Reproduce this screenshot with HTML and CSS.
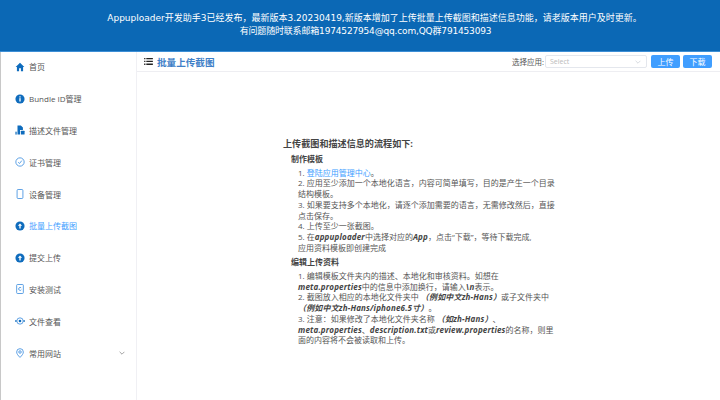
FILE: index.html
```html
<!DOCTYPE html>
<html lang="zh-CN">
<head>
  <meta charset="UTF-8" />
  <title>批量上传截图</title>
  <link rel="stylesheet" href="styles.css">
</head>
<body>
  <header class="notice">
    <p class="release">Appuploader开发助手3已经发布，最新版本3.20230419,新版本增加了上传批量上传截图和描述信息功能，请老版本用户及时更新。</p>
    <p class="contact">有问题随时联系邮箱1974527954@qq.com,QQ群791453093</p>
  </header>

  <div class="layout">
    <nav class="sidebar">
      <a class="item">
        <svg viewBox="0 0 12 12"><path class="fill" d="M6 1 .8 6h1.500v5h2.600V7.600h2.200V11h2.600V6h1.500z"/></svg>
        <span>首页</span>
      </a>
      <a class="item">
        <svg viewBox="0 0 12 12"><circle class="fill" cx="6" cy="6" r="5.500"/><rect x="5.200" y="5" width="1.600" height="4" fill="#fff"/><rect x="5.200" y="2.800" width="1.600" height="1.400" fill="#fff"/></svg>
        <span>Bundle ID管理</span>
      </a>
      <a class="item">
        <svg viewBox="0 0 12 12"><path class="fill" d="M3 .5h4l2.500 2.500v3H6v5.500H3z"/><rect class="fill" x="7" y="7" width="4.500" height="4.500" rx=".6"/><rect class="fill" x=".5" y="8" width="1.500" height="3.500"/></svg>
        <span>描述文件管理</span>
      </a>
      <a class="item">
        <svg viewBox="0 0 12 12"><circle class="line" cx="6" cy="6" r="5"/><path class="line" d="M3.800 6.300 5.400 7.800 8.200 4.300"/></svg>
        <span>证书管理</span>
      </a>
      <a class="item">
        <svg viewBox="0 0 12 12"><rect class="line" x="2.500" y=".6" width="7" height="10.800" rx="1.200"/></svg>
        <span>设备管理</span>
      </a>
      <a class="item active">
        <svg viewBox="0 0 12 12"><circle class="fill" cx="6" cy="6" r="5.500"/><path d="M6 3 3.400 5.800h1.800V9h1.600V5.800h1.800z" fill="#fff"/></svg>
        <span>批量上传截图</span>
      </a>
      <a class="item">
        <svg viewBox="0 0 12 12"><circle class="fill" cx="6" cy="6" r="5.500"/><path d="M6 3 3.400 5.800h1.800V9h1.600V5.800h1.800z" fill="#fff"/></svg>
        <span>提交上传</span>
      </a>
      <a class="item">
        <svg viewBox="0 0 12 12"><rect class="line" x="2" y=".6" width="8" height="10.800" rx="1"/><path class="line" d="M7.400 4.600A1.800 1.800 0 1 0 7.600 7"/></svg>
        <span>安装测试</span>
      </a>
      <a class="item">
        <svg viewBox="0 0 12 12"><circle class="line" cx="6" cy="6" r="3.800"/><circle class="fill" cx="6" cy="6" r="1.600"/><rect class="fill" x="0" y="5.200" width="2" height="1.600"/><rect class="fill" x="10" y="5.200" width="2" height="1.600"/></svg>
        <span>文件查看</span>
      </a>
      <a class="item">
        <svg viewBox="0 0 12 12"><path class="line" d="M6 11.300C3.600 8.900 2 7 2 4.800a4 4 0 0 1 8 0c0 2.200-1.600 4.100-4 6.500z"/><circle class="line" cx="6" cy="4.800" r="1.500"/></svg>
        <span>常用网站</span>
        <svg class="caret" viewBox="0 0 10 6"><path d="M1 1l4 4 4-4"/></svg>
      </a>
    </nav>

    <main class="content">
      <div class="toolbar">
        <svg class="menu-icon" viewBox="0 0 10 8"><path d="M0 0h1.500v1.500H0zM2.500 0H10v1.500H2.500zM0 3.200h1.500v1.500H0zM2.500 3.200H10v1.500H2.500zM0 6.400h1.500v1.500H0zM2.500 6.400H10v1.500H2.500z"/></svg>
        <h1>批量上传截图</h1>
        <label class="picker-label">选择应用:</label>
        <div class="select">
          <span>Select</span>
          <svg viewBox="0 0 10 6"><path d="M1 1l4 4 4-4"/></svg>
        </div>
        <button>上传</button>
        <button>下载</button>
      </div>

      <article class="guide">
        <h2>上传截图和描述信息的流程如下:</h2>
        <h3>制作模板</h3>
        <ol>
          <li>1. <a>登陆应用管理中心</a>。</li>
          <li>2. 应用至少添加一个本地化语言，内容可简单填写，目的是产生一个目录结构模板。</li>
          <li>3. 如果要支持多个本地化，请逐个添加需要的语言，无需修改然后，直接点击保存。</li>
          <li>4. 上传至少一张截图。</li>
          <li>5. 在<em>appuploader</em>中选择对应的<em>App</em>，点击“下载”，等待下载完成,<br>应用资料模板即创建完成</li>
        </ol>
        <h3 class="second">编辑上传资料</h3>
        <ol>
          <li>1. 编辑模板文件夹内的描述、本地化和审核资料。如想在<em>meta.properties</em>中的信息中添加换行，请输入<b>\n</b>表示。</li>
          <li>2. 截图放入相应的本地化文件夹中 <em>（例如中文zh-Hans）</em>或子文件夹中 <em>（例如中文zh-Hans/iphone6.5寸）</em>。</li>
          <li>3. 注意：如果修改了本地化文件夹名称 <em>（如zh-Hans）</em>、<em>meta.properties</em>、<em>description.txt</em>或<em>review.properties</em>的名称，则里面的内容将不会被读取和上传。</li>
        </ol>
      </article>
    </main>
  </div>
</body>
</html>
```

FILE: styles.css
```css
* {
  box-sizing: border-box;
}
html, body {
  height: 100%;
}
body {
  margin: 0;
  overflow: hidden;
  font-family: "Open Sans", "Noto Sans CJK SC", sans-serif;
  color: #444;
  background: #fff;
}
p, h1, h2, h3, ol {
  margin: 0;
  padding: 0;
}
.notice {
  height: 52px;
  padding-top: 12px;
  background: #0b68b5;
  border-bottom: 1px solid #3d8fd6;
  color: #fff;
  font-family: "DejaVu Sans", "Noto Sans CJK SC", sans-serif;
  font-size: 9px;
  line-height: 13px;
  text-align: center;
}
.release {
  padding-left: 29px;
}
.contact {
  padding-left: 11px;
  letter-spacing: -0.17px;
}
.layout {
  display: flex;
  height: 348px;
  border-left: 1px solid #c8c8c8;
}
.sidebar {
  width: 136px;
  flex-shrink: 0;
  padding-top: 0;
  border-right: 1px solid #f0f0f4;
}
.item {
  display: flex;
  align-items: center;
  height: 31.800px;
  padding-left: 14px;
  font-size: 8px;
  color: #555;
}
.item:first-child {
  margin-top: -1px;
}
.item svg {
  width: 10px;
  height: 10px;
  margin-right: 4px;
}
.item .fill {
  fill: #0f6cbd;
}
.item .line {
  fill: none;
  stroke: #3f8fe0;
  stroke-width: 1;
}
.item.active {
  color: #409eff;
}
.item .caret {
  width: 6px;
  height: 4px;
  margin: 0 11px 0 auto;
  fill: none;
  stroke: #666;
}
.content {
  flex: 1;
  min-width: 0;
}
.toolbar {
  display: flex;
  align-items: center;
  height: 20px;
  padding: 0 8px 0 7px;
  border-bottom: 1px solid #eeeef2;
}
.menu-icon {
  width: 9px;
  height: 7px;
  margin-right: 4px;
  fill: #222;
}
.toolbar h1 {
  font-size: 9.600px;
  font-weight: 700;
  color: #3f7fc8;
}
.picker-label {
  margin-left: auto;
  margin-right: 1px;
  font-size: 7.500px;
  color: #555;
}
.select {
  display: flex;
  align-items: center;
  justify-content: space-between;
  width: 102px;
  height: 13px;
  margin-right: 1px;
  padding: 0 5px 0 4px;
  border: 1px solid #e4e7ed;
  border-radius: 2px;
  font-size: 7px;
  color: #bbb;
}
.select svg {
  width: 6px;
  height: 4px;
  fill: none;
  stroke: #c0c4cc;
}
.toolbar button {
  width: 29px;
  height: 13px;
  margin-left: 3px;
  padding: 0;
  border: 0;
  border-radius: 2px;
  background: #409eff;
  color: #fff;
  font-family: inherit;
  font-size: 8px;
}
.guide {
  width: 272px;
  margin: 65px 0 0 146px;
  font-size: 8px;
  line-height: 10.700px;
  color: #555;
}
.guide h2 {
  font-size: 9.100px;
  line-height: 14px;
  font-weight: 700;
  color: #444;
}
.guide h3 {
  margin: 2px 0 2.700px 8px;
  font-size: 8px;
  line-height: 12px;
  font-weight: 700;
  color: #444;
}
.guide h3.second {
  margin-top: 3px;
}
.guide ol {
  list-style: none;
  margin-left: 15px;
}
.guide li a {
  color: #409eff;
}
.guide em, .guide b {
  font-weight: 700;
  font-style: italic;
  letter-spacing: 0.17px;
  color: #444;
}
```
